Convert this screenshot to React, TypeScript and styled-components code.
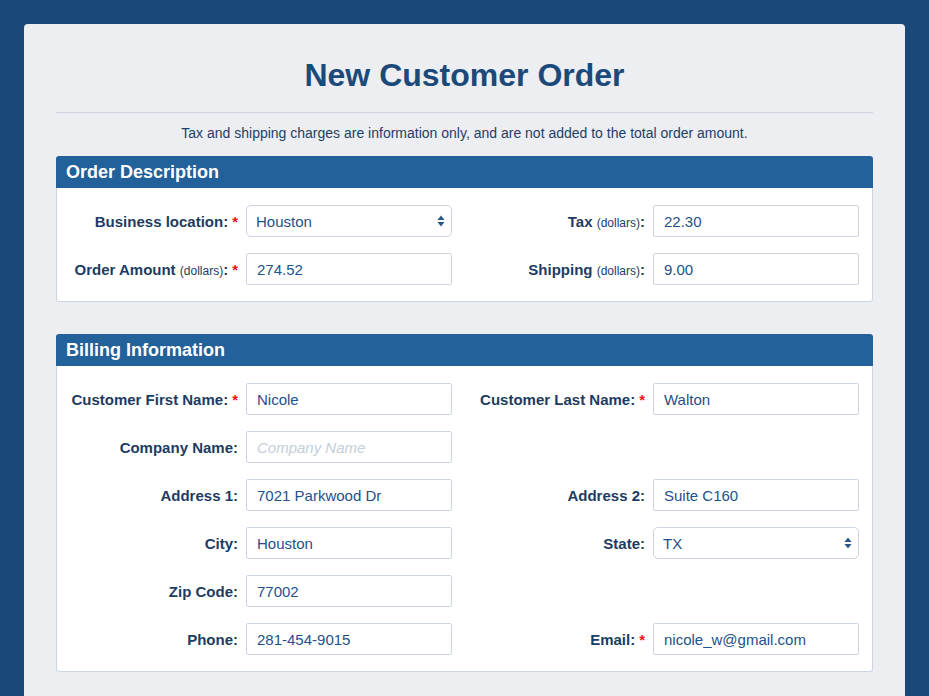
import React from 'react';
import styled, { createGlobalStyle } from 'styled-components';

const GlobalStyle = createGlobalStyle`
    html, body {
        margin: 0;
        padding: 0;
        background: #1a4877;
        font-family: 'Liberation Sans', Arial, sans-serif;
    }
`;

const Page = styled.div`
    padding: 24px 24px 0;
    min-height: 696px;
    box-sizing: border-box;
`;

const Card = styled.div`
    background: #eceef2;
    border-radius: 4px 4px 0 0;
    padding: 32px 32px 40px;
`;

const Title = styled.h1`
    margin: 0;
    font-size: 32px;
    line-height: 38px;
    font-weight: 700;
    text-align: center;
    color: #1b4a7a;
`;

const Rule = styled.hr`
    border: 0;
    border-top: 1px solid #ccd5e0;
    margin: 18px 0 0;
`;

const Note = styled.p`
    margin: 10px 0 13px;
    font-size: 14px;
    line-height: 20px;
    text-align: center;
    color: #1f3e66;
`;

const Panel = styled.section`
    & + & {
        margin-top: 32px;
    }
`;

const PanelHeader = styled.h2`
    margin: 0;
    height: 32px;
    line-height: 32px;
    padding: 0 10px;
    background: #22619a;
    border-radius: 3px 3px 0 0;
    color: #fff;
    font-size: 18px;
    font-weight: 700;
`;

const PanelBody = styled.div`
    background: #fff;
    border: 1px solid #ccd5e0;
    border-top: 0;
    border-radius: 0 0 3px 3px;
    padding: 17px 0 16px;
    display: grid;
    grid-template-columns: 407px 1fr;
    row-gap: 16px;
`;

const Field = styled.div`
    display: flex;
    align-items: center;
    gap: 8px;
`;

const Empty = styled.div``;

const Label = styled.label`
    width: 181px;
    flex-shrink: 0;
    text-align: right;
    font-size: 15px;
    font-weight: 700;
    color: #1c3c63;
    white-space: nowrap;
`;

const Unit = styled.span`
    font-size: 12px;
    font-weight: 400;
`;

const Req = styled.span`
    color: #e8141b;
    margin-left: 4px;
`;

const TextInput = styled.input`
    box-sizing: border-box;
    width: 206px;
    height: 32px;
    margin: 0;
    padding: 0 10px;
    border: 1px solid #ccd5e0;
    border-radius: 2px;
    background: #fff;
    font-family: 'Liberation Sans', Arial, sans-serif;
    font-size: 15px;
    color: #23518a;
    outline: none;

    &::placeholder {
        color: #c3cedb;
        font-style: italic;
    }
`;

const SelectWrap = styled.div`
    position: relative;
    width: 206px;
    height: 32px;
`;

const Select = styled.select`
    box-sizing: border-box;
    width: 100%;
    height: 100%;
    margin: 0;
    padding: 0 24px 0 9px;
    border: 1px solid #ccd5e0;
    border-radius: 5px;
    background: #fff;
    appearance: none;
    -webkit-appearance: none;
    font-family: 'Liberation Sans', Arial, sans-serif;
    font-size: 15px;
    color: #23518a;
    outline: none;
`;

const Arrows = styled.svg`
    position: absolute;
    right: 7px;
    top: 10px;
    pointer-events: none;
`;

type FieldDef = {
    label?: string;
    unit?: string;
    required?: boolean;
    value?: string;
    placeholder?: string;
    select?: boolean;
};

const FormField = ({ label, unit, required, value, placeholder, select }: FieldDef) => {
    if (!label) return <Empty />;
    return (
        <Field>
            <Label>
                {label}
                {unit && (
                    <>
                        {' '}
                        <Unit>({unit})</Unit>
                    </>
                )}
                :{required && <Req>*</Req>}
            </Label>
            {select ? (
                <SelectWrap>
                    <Select value={value} onChange={() => undefined}>
                        <option>{value}</option>
                    </Select>
                    <Arrows width='8' height='12' viewBox='0 0 8 12'>
                        <path d='M4 0.5 L7.5 5 H0.5 Z' fill='#2a5687' />
                        <path d='M4 11.5 L7.5 7 H0.5 Z' fill='#2a5687' />
                    </Arrows>
                </SelectWrap>
            ) : (
                <TextInput readOnly value={value ?? ''} placeholder={placeholder} />
            )}
        </Field>
    );
};

const orderFields: FieldDef[] = [
    { label: 'Business location', required: true, value: 'Houston', select: true },
    { label: 'Tax', unit: 'dollars', value: '22.30' },
    { label: 'Order Amount', unit: 'dollars', required: true, value: '274.52' },
    { label: 'Shipping', unit: 'dollars', value: '9.00' },
];

const billingFields: FieldDef[] = [
    { label: 'Customer First Name', required: true, value: 'Nicole' },
    { label: 'Customer Last Name', required: true, value: 'Walton' },
    { label: 'Company Name', placeholder: 'Company Name' },
    {},
    { label: 'Address 1', value: '7021 Parkwood Dr' },
    { label: 'Address 2', value: 'Suite C160' },
    { label: 'City', value: 'Houston' },
    { label: 'State', value: 'TX', select: true },
    { label: 'Zip Code', value: '77002' },
    {},
    { label: 'Phone', value: '281-454-9015' },
    { label: 'Email', required: true, value: 'nicole_w@gmail.com' },
];

const App = () => (
    <>
        <GlobalStyle />
        <Page>
            <Card>
                <Title>New Customer Order</Title>
                <Rule />
                <Note>Tax and shipping charges are information only, and are not added to the total order amount.</Note>
                <Panel>
                    <PanelHeader>Order Description</PanelHeader>
                    <PanelBody>
                        {orderFields.map((f, i) => (
                            <FormField key={i} {...f} />
                        ))}
                    </PanelBody>
                </Panel>
                <Panel>
                    <PanelHeader>Billing Information</PanelHeader>
                    <PanelBody>
                        {billingFields.map((f, i) => (
                            <FormField key={i} {...f} />
                        ))}
                    </PanelBody>
                </Panel>
            </Card>
        </Page>
    </>
);

export default App;
